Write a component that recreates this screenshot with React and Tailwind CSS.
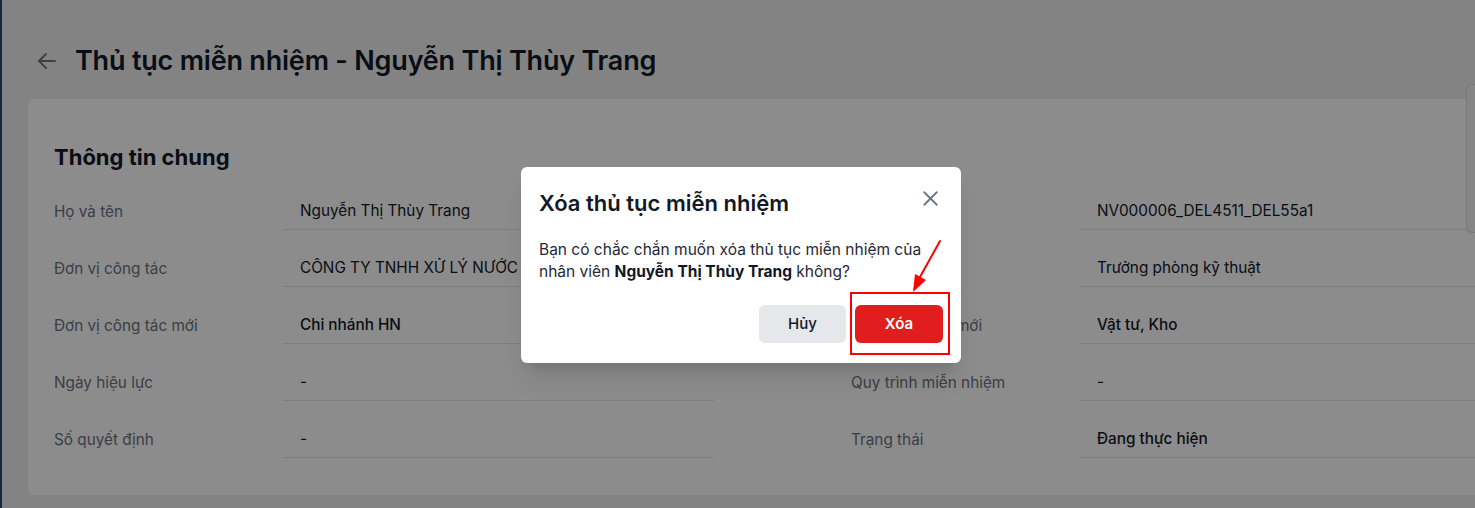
import React from 'react';
import { X } from 'lucide-react';

const leftRows = [
  { label: 'Họ và tên', value: 'Nguyễn Thị Thùy Trang' },
  { label: 'Đơn vị công tác', value: 'CÔNG TY TNHH XỬ LÝ NƯỚC SẠCH HÀ NỘI' },
  { label: 'Đơn vị công tác mới', value: 'Chi nhánh HN', strong: true },
  { label: 'Ngày hiệu lực', value: '-' },
  { label: 'Số quyết định', value: '-' },
];

const rightRows = [
  { label: 'Mã nhân viên', value: 'NV000006_DEL4511_DEL55a1' },
  { label: 'Chức vụ', value: 'Trưởng phòng kỹ thuật' },
  { label: 'Vị trí công tác mới', value: 'Vật tư, Kho', strong: true },
  { label: 'Quy trình miễn nhiệm', value: '-' },
  { label: 'Trạng thái', value: 'Đang thực hiện', strong: true },
];

const InfoRow = ({ label, value, strong }) => (
  <div className="flex h-[57px]">
    <div className="w-[229px] shrink-0 flex items-end pb-[8px] text-[15.3px] leading-5 text-[#6b7280]">
      {label}
    </div>
    <div
      className={`flex-1 min-w-0 flex items-end pb-[8px] pl-[17px] border-b border-[#e2e4e8] text-[15.3px] leading-5 text-[#111827] whitespace-nowrap overflow-hidden ${
        strong ? 'font-medium' : 'font-normal'
      }`}
    >
      {value}
    </div>
  </div>
);

const App = () => {
  return (
    <div
      className="relative w-[1475px] h-[508px] overflow-hidden bg-[#eeeeee] border-l-2 border-[#1a2540]"
      style={{ fontFamily: 'Inter, "Noto Sans", sans-serif' }}
    >
      {/* Header */}
      <div className="flex items-center pt-[43px] pl-[35px]">
        <svg width="20" height="18" viewBox="0 0 20 18" fill="none" stroke="#6b7280" strokeWidth="1.8" strokeLinecap="round" strokeLinejoin="round">
          <path d="M18 9H2" />
          <path d="M9 2L2 9l7 7" />
        </svg>
        <h1 className="ml-[18px] text-[27px] leading-9 font-semibold text-[#111827] tracking-[-0.2px]">
          Thủ tục miễn nhiệm - Nguyễn Thị Thùy Trang
        </h1>
      </div>

      {/* Card */}
      <div className="mt-[20px] ml-[26px] w-[1509px] bg-white rounded-md pt-[42px] pb-[37px] pl-[26px] pr-[26px]">
        <h2 className="text-[22px] leading-8 font-bold text-[#111827]">Thông tin chung</h2>
        <div className="grid grid-cols-[660px_660px] gap-x-[137px]">
          <div>
            {leftRows.map((r) => (
              <InfoRow key={r.label} {...r} />
            ))}
          </div>
          <div>
            {rightRows.map((r) => (
              <InfoRow key={r.label} {...r} />
            ))}
          </div>
        </div>
      </div>

      {/* Floating side tab */}
      <div className="absolute right-0 top-[84px] w-[9px] h-[149px] bg-[#f4f4f4] border border-r-0 border-[#dcdcdc] rounded-l-md" />

      {/* Overlay */}
      <div className="absolute inset-0 bg-black/45" />

      {/* Modal */}
      <div className="absolute left-[519px] top-[167px] w-[440px] bg-white rounded-md shadow-xl pt-[22px] pb-[20px] px-[18px]">
        <div className="flex items-start justify-between">
          <h3 className="text-[22px] leading-7 font-semibold text-[#111827]">Xóa thủ tục miễn nhiệm</h3>
          <button className="mt-[-3px] mr-0 text-[#6b7280]">
            <X size={25} strokeWidth={1.7} />
          </button>
        </div>
        <p className="mt-[22px] text-[15.5px] leading-[22px] text-[#1f2937]">
          Bạn có chắc chắn muốn xóa thủ tục miễn nhiệm của nhân viên{' '}
          <span className="font-bold text-[#111827]">Nguyễn Thị Thùy Trang</span> không?
        </p>
        <div className="mt-[22px] flex justify-end gap-[9px]">
          <button className="w-[87px] h-[38px] rounded-md bg-[#e5e7eb] text-[15px] font-medium text-[#111827]">
            Hủy
          </button>
          <button className="w-[88px] h-[38px] rounded-md bg-[#e21d1d] text-[15px] font-semibold text-white">
            Xóa
          </button>
        </div>
      </div>

      {/* Annotation */}
      <div className="absolute left-[848px] top-[292px] w-[100px] h-[63px] border-2 border-[#ff0000]" />
      <svg className="absolute left-[898px] top-[236px]" width="50" height="60" viewBox="0 0 50 60">
        <line x1="40" y1="5" x2="20" y2="41" stroke="#ff0000" strokeWidth="2" strokeLinecap="round" />
        <polygon points="13,56 15,38 26,44" fill="#ff0000" />
      </svg>
    </div>
  );
};

export default App;
